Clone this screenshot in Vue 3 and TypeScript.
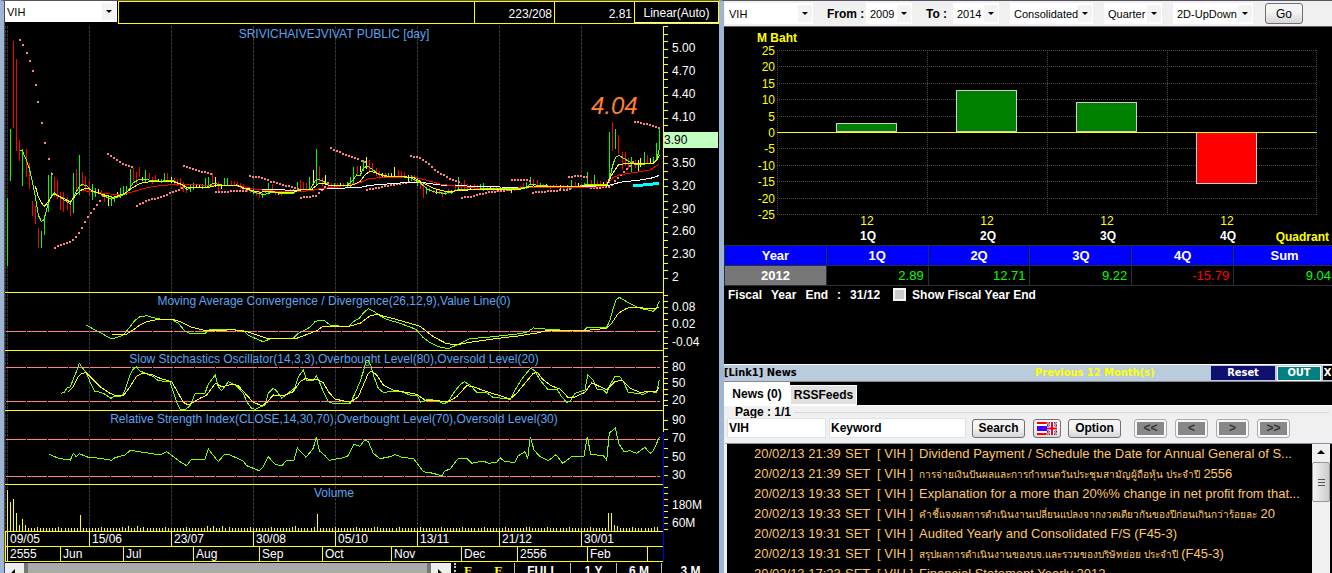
<script setup lang="ts">
type Pt = [number, number]

// Trace data is kept on a grid of three units per pixel.
const UNIT = 3
const LOWER = 855
const BAR_STEP = 9.11
const FIRST_BAR = 22

function parse(text: string, dy = 0): Pt[] {
  return text.trim().split(/\s+/).map((pair) => {
    const [x, y] = pair.split(',').map(Number)
    return [x / UNIT, (y + dy) / UNIT] as Pt
  })
}
function line(text: string, dy = 0): string {
  return parse(text, dy).map(([x, y]) => `${x.toFixed(1)},${y.toFixed(1)}`).join(' ')
}

const traces = [
  { color: '#ffffff', points: line('725,566 800,568 880,571 960,568 1000,565 1075,563 1110,556 1200,549 1270,548 1330,556 1400,558 1500,561 1620,562 1780,558 1820,558 1860,547 1920,540 1960,533 1978,526') },
  { color: '#ff0000', points: line('247,570 262,574 290,577 330,582 370,583 410,572 440,563 480,557 540,552 620,556 710,556 760,566 800,572 880,576 930,572 960,566 1000,562 1080,548 1110,535 1170,532 1240,531 1270,538 1320,552 1380,560 1450,566 1600,563 1760,562 1815,560 1840,532 1860,524 1900,518 1950,510 1978,492') },
  { color: '#80ff00', points: line('61,451 67,452 79,480 88,505 97,545 106,590 115,645 124,664 130,662 136,645 145,610 154,588 163,578 172,586 190,598 211,612 220,592 229,575 238,560 247,553 262,558 277,575 295,578 313,588 334,598 352,592 370,585 385,572 400,548 415,540 440,539 480,544 500,542 520,542 545,555 560,568 575,563 620,562 640,550 670,556 710,555 735,565 760,576 790,584 820,576 850,582 880,580 895,570 930,569 945,542 955,538 970,543 985,556 1040,556 1055,545 1070,525 1080,527 1090,505 1102,498 1120,510 1135,522 1150,528 1230,532 1262,550 1280,566 1300,575 1330,580 1355,578 1370,570 1440,567 1560,565 1583,560 1590,552 1620,557 1700,560 1740,558 1765,553 1800,555 1822,553 1830,530 1840,490 1848,470 1858,467 1875,477 1895,490 1910,494 1960,490 1970,480 1978,447') },
  { color: '#ffff00', points: line('106,558 115,590 124,608 133,619 145,605 154,590 163,582 190,595 211,606 230,582 247,568 262,565 277,572 310,584 340,592 375,580 400,562 420,550 450,545 520,545 545,553 560,562 620,563 650,556 710,556 740,568 780,577 800,574 850,578 880,577 900,570 935,568 955,552 975,551 990,557 1050,558 1080,545 1095,525 1110,513 1130,520 1160,528 1240,532 1270,550 1300,565 1340,575 1370,572 1440,568 1560,568 1600,558 1700,561 1780,556 1820,556 1835,525 1855,495 1870,492 1960,490 1972,480 1978,465') },
  { color: '#80ff00', points: line('259,120 280,132 300,142 320,154 335,162 350,157 365,152 375,145 390,125 405,106 420,95 440,92 460,98 480,102 515,103 535,115 555,138 570,145 615,145 630,133 650,133 700,134 730,137 745,150 765,160 790,170 810,162 880,160 895,145 930,127 945,110 960,105 975,108 990,120 1045,126 1060,110 1080,98 1090,84 1105,71 1120,78 1140,92 1160,103 1200,115 1240,130 1250,135 1270,158 1290,173 1315,185 1345,191 1375,178 1410,161 1480,155 1560,146 1580,142 1600,129 1620,130 1640,133 1680,135 1750,138 1760,128 1820,127 1830,105 1840,70 1848,45 1858,37 1880,50 1910,66 1930,72 1960,79 1970,68 1978,48', LOWER) },
  { color: '#ffff00', points: line('337,147 360,149 380,147 400,135 420,120 440,110 470,104 520,103 545,112 570,125 600,133 620,138 700,134 740,140 770,150 800,160 850,162 890,160 930,145 950,137 970,123 1050,123 1080,115 1110,93 1130,88 1170,98 1230,115 1260,124 1300,155 1340,176 1370,179 1410,172 1480,162 1560,152 1610,144 1640,137 1740,138 1820,130 1835,115 1855,85 1880,70 1900,66 1960,72 1978,67', LOWER) },
  { color: '#80ff00', points: line('184,325 193,322 202,307 211,306 220,282 229,260 238,235 247,248 259,263 270,290 283,318 295,320 310,325 333,340 345,333 360,335 370,328 380,300 390,270 400,252 409,245 420,258 440,266 460,275 475,287 510,290 520,320 530,352 540,372 555,374 570,362 585,327 615,325 625,297 646,270 655,305 665,317 685,290 700,297 712,305 730,325 740,350 755,370 765,373 795,360 805,325 820,310 830,318 845,340 860,328 885,308 895,275 910,256 920,285 940,285 949,273 958,290 970,320 985,350 1000,355 1050,357 1065,325 1080,290 1090,260 1098,228 1105,226 1112,240 1122,275 1135,310 1150,322 1200,318 1230,330 1252,332 1262,352 1285,342 1320,350 1330,357 1345,350 1360,325 1380,300 1393,290 1410,300 1430,322 1460,323 1480,338 1520,340 1530,345 1540,325 1560,290 1575,270 1592,250 1605,258 1620,285 1645,315 1670,312 1685,335 1700,352 1710,350 1725,325 1755,315 1763,270 1780,285 1790,312 1810,315 1820,325 1830,300 1845,274 1860,275 1870,290 1885,322 1910,325 1930,328 1945,320 1970,322 1978,285', LOWER) },
  { color: '#ffff00', points: line('204,320 220,305 235,275 245,265 259,263 275,280 300,305 330,325 350,333 372,330 390,305 410,273 430,264 460,270 480,280 515,290 535,325 550,352 565,360 580,352 600,340 620,330 646,295 665,305 700,297 715,302 735,325 760,352 785,362 800,353 820,330 850,332 880,320 900,290 915,281 955,285 970,293 985,320 1005,342 1050,352 1075,335 1090,300 1105,265 1115,258 1130,270 1150,300 1180,315 1250,328 1275,345 1320,348 1345,350 1370,335 1400,302 1420,305 1460,320 1500,332 1530,342 1550,325 1575,295 1600,265 1612,262 1630,285 1655,303 1680,312 1705,338 1720,338 1755,322 1775,293 1800,305 1820,314 1845,290 1865,285 1890,310 1920,322 1970,318 1978,305', LOWER) },
  { color: '#80ff00', points: line('148,508 175,520 211,525 220,505 229,515 238,506 265,517 300,520 335,526 345,518 375,510 391,496 430,502 480,510 500,500 520,515 540,530 560,542 575,522 615,522 625,492 655,530 672,509 690,510 730,528 740,542 778,557 790,545 805,515 825,538 845,543 860,525 882,525 892,489 918,517 940,490 949,455 958,497 975,512 988,526 1030,518 1045,512 1062,478 1080,484 1095,464 1105,470 1120,505 1140,521 1170,515 1185,509 1210,518 1240,520 1255,540 1270,560 1300,565 1325,573 1335,557 1350,553 1375,520 1400,520 1415,535 1450,528 1465,535 1490,532 1500,518 1515,530 1545,532 1555,512 1575,500 1583,520 1591,455 1602,495 1620,515 1645,527 1668,509 1688,535 1715,515 1752,513 1762,455 1772,508 1810,512 1820,525 1828,445 1846,428 1856,475 1872,500 1890,497 1910,505 1935,487 1950,505 1960,498 1970,475 1978,457', LOWER) },
]
const longAverage = line('1900,557 1930,555 1978,550')

const barText = `22,595,800,g 31,387,543,g 40,123,383,r 49,178,455,r 58,420,483,r 67,447,558,g 79,447,530,r 88,490,567,r
97,603,648,r 106,618,671,r 115,685,744,r 124,692,744,g 133,645,704,g 145,525,636,g 154,517,596,g 163,530,590,r
172,541,598,r 181,575,628,r 190,577,636,r 202,590,630,r 211,600,648,r 220,519,640,g 229,508,570,r 238,465,585,g
247,516,558,r 256,530,570,r 268,542,585,r 277,551,600,g 286,565,592,g 295,568,582,y 304,569,586,r 313,580,606,r
325,585,617,y 334,590,617,g 343,588,606,g 352,577,593,y 361,563,592,g 370,558,585,g 379,558,585,g 391,508,572,g
400,503,543,r 409,515,550,r 418,501,532,r 427,530,543,y 436,510,548,g 448,519,538,r 457,530,550,r 466,524,545,r
475,538,548,y 484,537,548,g 493,519,545,g 502,519,541,r 514,530,548,y 523,535,552,r 532,538,560,r 541,534,567,r
550,545,575,r 559,558,578,r 571,552,575,g 580,549,571,g 589,556,566,y 598,556,566,y 607,552,566,g 616,535,566,g
625,530,560,g 637,519,552,r 646,530,560,y 655,545,575,r 664,552,567,y 673,534,556,g 682,534,556,g 694,542,556,r
703,542,556,r 712,545,560,r 721,550,568,r 730,552,574,r 742,560,576,r 751,564,580,r 760,568,582,g 769,572,588,r
778,572,592,r 787,578,594,g 796,566,578,g 805,549,578,g 817,552,578,r 826,570,584,r 835,573,584,y 844,572,586,r
853,574,584,y 862,570,582,g 871,568,580,r 880,566,580,g 892,545,575,g 901,541,570,r 910,545,565,r 919,549,570,r
928,531,567,g 940,510,556,y 949,447,556,g 958,498,545,r 967,533,556,r 976,525,556,y 985,545,560,r 994,548,562,r
1003,550,562,g 1012,548,562,r 1021,550,560,y 1030,550,562,r 1042,546,562,g 1051,531,560,g 1060,501,552,g 1072,499,522,r
1081,497,515,y 1090,480,512,g 1099,470,505,y 1108,480,518,r 1117,489,515,r 1129,503,526,r 1138,512,535,r 1147,519,532,y
1156,520,534,r 1165,518,534,g 1174,520,532,y 1183,501,530,y 1195,510,530,r 1204,512,530,r 1213,515,532,r 1225,526,548,y
1234,526,544,g 1243,526,550,r 1252,533,556,g 1261,540,568,r 1270,552,594,r 1279,560,580,g 1288,565,578,r 1300,570,580,r
1309,568,582,y 1318,570,583,r 1327,575,590,r 1336,572,584,g 1345,568,582,r 1354,570,583,g 1366,552,572,r 1375,530,572,g
1384,549,567,r 1393,541,567,r 1402,552,567,r 1411,556,570,y 1423,552,567,r 1432,556,570,r 1441,552,567,g 1450,548,572,g
1462,560,572,r 1471,562,572,y 1480,560,572,r 1489,560,574,r 1501,562,572,y 1513,560,572,r 1525,562,574,g 1534,560,578,y
1543,562,574,r 1552,560,570,y 1561,558,570,r 1570,549,567,r 1579,545,565,g 1591,531,556,g 1600,537,556,r 1612,541,556,r
1621,550,562,g 1630,552,564,r 1639,552,564,y 1651,554,566,r 1660,554,564,g 1669,553,565,r 1681,555,566,y 1690,554,566,r
1702,555,567,g 1714,541,567,g 1726,545,560,r 1735,548,560,y 1744,552,562,r 1753,550,562,g 1762,516,560,g 1774,541,552,r
1783,526,552,g 1792,541,556,r 1801,544,556,r 1810,545,556,y 1819,543,560,r 1828,396,550,g 1837,367,455,r 1846,387,447,g
1855,405,462,r 1867,456,510,r 1876,456,497,r 1885,475,508,r 1894,471,516,g 1906,480,505,r 1915,480,512,y 1921,475,503,y
1933,456,490,g 1942,464,490,r 1951,475,492,y 1960,471,492,g 1969,430,480,g 1978,387,447,g`
const barColors: Record<string, string> = { g: '#00ff00', r: '#ff0000', y: '#ffff00' }
const priceBars = barText.split(/\s+/).map((item) => {
  const [x, top, bottom, kind] = item.split(',')
  return {
    x: Math.floor(Number(x) / UNIT),
    y: Math.round(Number(top) / UNIT),
    h: Math.round((Number(bottom) - Number(top)) / UNIT),
    color: barColors[kind],
  }
})

const sarRuns = [
  '162,743 180,735 200,728 219,720 228,710 237,697 246,680 255,662 267,646 276,631 285,620 294,608 303,596 312,583',
  '323,463 340,472 367,490 400,502', '408,617 433,604 487,589 542,566', '549,499 590,512 636,522',
  '646,577 700,574 742,572', '747,529 775,532 815,546 892,566', '900,593 945,588 965,570 984,547',
  '992,445 1045,468 1090,484', '1099,569 1150,560 1232,546', '1230,469 1255,472 1280,488 1300,508 1340,532 1378,548',
  '1383,593 1410,590 1460,578 1540,568', '1533,539 1590,542', '1598,578 1650,574 1710,568',
  '1704,530 1740,529 1762,533', '1770,565 1830,560 1850,535 1870,515 1895,490', '1902,365 1935,372 1978,386',
]
function sampleRun(text: string): Pt[] {
  const pts = parse(text)
  const out: Pt[] = []
  for (let x = pts[0][0]; x <= pts[pts.length - 1][0] + 1; x += BAR_STEP / UNIT) {
    let k = 1
    while (k < pts.length - 1 && pts[k][0] < x) k++
    const [x0, y0] = pts[k - 1]
    const [x1, y1] = pts[k]
    out.push([Math.floor(x), Math.round(y0 + ((x - x0) / (x1 - x0)) * (y1 - y0))])
  }
  return out
}
const sarDots: Pt[] = [
  ...parse('57,121 66,136 78,160 87,184 96,214 105,256 113,307 123,368 132,428 144,478 153,521')
    .map(([x, y]) => [Math.floor(x), Math.round(y)] as Pt),
  ...sarRuns.flatMap(sampleRun),
]

const volumeHeights: Record<number, number> = {
  0: 41, 1: 29, 2: 32, 3: 18, 4: 6, 5: 12, 6: 6, 24: 16, 40: 5, 43: 5, 66: 5, 68: 5, 71: 5, 95: 5, 102: 17,
  121: 4, 122: 4, 172: 4, 185: 4, 198: 18, 199: 18, 200: 6, 201: 5, 213: 4, 214: 4,
}
const volumeBars = Array.from({ length: 215 }, (_, i) => {
  const h = volumeHeights[i] ?? (i % 7 === 3 ? 4 : 3)
  return { x: Math.floor((FIRST_BAR + i * BAR_STEP) / UNIT), y: 531 - h, h }
})

const gridX = [7, 89, 171, 253, 335, 417, 499, 581]
const dates = ['09/05', '15/06', '23/07', '30/08', '05/10', '13/11', '21/12', '30/01']
const months = [
  { x: 7, label: '2555' }, { x: 60, label: 'Jun' }, { x: 123, label: 'Jul' }, { x: 193, label: 'Aug' },
  { x: 259, label: 'Sep' }, { x: 322, label: 'Oct' }, { x: 391, label: 'Nov' }, { x: 461, label: 'Dec' },
  { x: 517, label: '2556' }, { x: 587, label: 'Feb' }, { x: 647, label: '' },
]
const separators = [292, 350, 410, 484, 531, 546, 561]
const levels = [331, 367, 401, 439, 476]
const priceTicks = Array.from({ length: 34 }, (_, i) => Math.round(26 + i * 7.63)).filter((y) => y < 130 || y > 148)
const lowerTicks = [295, 301, 307, 313, 319, 325, 331, 337, 343, 348, 356, 361, 367, 372, 378, 383, 389, 394, 400, 405,
  420, 429, 439, 448, 457, 466, 475, 487, 493, 499, 505, 511, 517, 523, 529]
const axisLabels = [
  { y: 52, t: '5.00' }, { y: 75, t: '4.70' }, { y: 98, t: '4.40' }, { y: 121, t: '4.10' }, { y: 167, t: '3.50' },
  { y: 190, t: '3.20' }, { y: 213, t: '2.90' }, { y: 235, t: '2.60' }, { y: 258, t: '2.30' }, { y: 281, t: '2' },
  { y: 311, t: '0.08' }, { y: 328, t: '0.02' }, { y: 346, t: '-0.04' }, { y: 371, t: '80' }, { y: 387, t: '50' },
  { y: 404, t: '20' }, { y: 424, t: '90' }, { y: 442, t: '70' }, { y: 461, t: '50' }, { y: 479, t: '30' },
  { y: 509, t: '180M' }, { y: 527, t: '60M' },
]
const titles = [
  { y: 38, t: 'SRIVICHAIVEJVIVAT PUBLIC [day]' },
  { y: 305, t: 'Moving Average Convergence / Divergence(26,12,9),Value Line(0)' },
  { y: 363, t: 'Slow Stochastics Oscillator(14,3,3),Overbought Level(80),Oversold Level(20)' },
  { y: 423, t: 'Relative Strength Index(CLOSE,14,30,70),Overbought Level(70),Oversold Level(30)' },
  { y: 497, t: 'Volume' },
]
const ranges = ['FULL', '1 Y', '6 M', '3 M']

const profitTicks = [25, 20, 15, 10, 5, 0, -5, -10, -15, -20, -25].map((v, i) => ({ v, y: Math.round(50 + i * 16.4) }))
const profitBars = [
  { q: '1Q', x: 836, y: 123, h: 8, color: '#008000' },
  { q: '2Q', x: 956, y: 90, h: 41, color: '#008000' },
  { q: '3Q', x: 1076, y: 102, h: 29, color: '#008000' },
  { q: '4Q', x: 1196, y: 132, h: 51, color: '#ff0000' },
]
const values = ['2.89', '12.71', '9.22', '-15.79', '9.04']

const news = [
  { time: '20/02/13 21:39', title: 'Dividend Payment / Schedule the Date for Annual General of S...' },
  { time: '20/02/13 21:39', thai: 'การจ่ายเงินปันผลและการกำหนดวันประชุมสามัญผู้ถือหุ้น ประจำปี', title: ' 2556' },
  { time: '20/02/13 19:33', title: 'Explanation for a more than 20%% change in net profit from that...' },
  { time: '20/02/13 19:33', thai: 'คำชี้แจงผลการดำเนินงานเปลี่ยนแปลงจากงวดเดียวกันของปีก่อนเกินกว่าร้อยละ', title: ' 20' },
  { time: '20/02/13 19:31', title: 'Audited Yearly and Consolidated F/S (F45-3)' },
  { time: '20/02/13 19:31', thai: 'สรุปผลการดำเนินงานของบจ.และรวมของบริษัทย่อย ประจำปี', title: ' (F45-3)' },
  { time: '20/02/13 17:23', title: 'Financial Statement Yearly 2012' },
]
</script>

<template>
  <main class="desk">
    <section class="chart-panel">
      <header class="chart-head">
        <label class="combo symbol">
          <select aria-label="Symbol"><option>VIH</option></select>
        </label>
        <div class="readout">
          <span class="cell grow"></span>
          <span class="cell">223/208</span>
          <span class="cell">2.81</span>
          <button class="scale" type="button">Linear(Auto)</button>
        </div>
      </header>

      <svg class="plot" viewBox="5 23 714 540" role="img" aria-label="Price chart">
        <line x1="5.5" x2="5.5" y1="26" y2="531" class="grid" />
        <line v-for="x in gridX" :key="x" :x1="x + 0.5" :x2="x + 0.5" y1="26" y2="531" class="grid" />
        <text v-for="t in titles" :key="t.y" x="334" :y="t.y" class="title">{{ t.t }}</text>

        <rect v-for="(b, i) in priceBars" :key="'b' + i" :x="b.x" :y="b.y" width="1" :height="b.h" :fill="b.color" />
        <rect v-for="(d, i) in sarDots" :key="'d' + i" :x="d[0]" :y="d[1] - 1" width="2" height="2" fill="#ff8080" />
        <line v-for="y in levels" :key="'l' + y" x1="6" x2="660" :y1="y + 0.5" :y2="y + 0.5" class="level" />
        <polyline v-for="(t, i) in traces" :key="'t' + i" :points="t.points" :stroke="t.color" class="trace" />
        <polyline :points="longAverage" class="long" />
        <text x="591" y="114" class="peak">4.04</text>
        <rect v-for="(v, i) in volumeBars" :key="'v' + i" :x="v.x" :y="v.y" width="1" :height="v.h" fill="#ffff00" />

        <line v-for="y in separators" :key="'s' + y" x1="5" x2="664" :y1="y + 0.5" :y2="y + 0.5" class="rule" />
        <line x1="5.5" x2="5.5" y1="531" y2="562" class="rule" />
        <line x1="663.5" x2="663.5" y1="26" y2="432" class="rule" />
        <line x1="663.5" x2="663.5" y1="432" y2="562" class="rule blue" />
        <line v-for="y in priceTicks" :key="'p' + y" x1="664" x2="668" :y1="y + 0.5" :y2="y + 0.5" class="rule" />
        <line v-for="y in lowerTicks" :key="'q' + y" x1="664" x2="668" :y1="y + 0.5" :y2="y + 0.5" class="rule" />
        <text v-for="a in axisLabels" :key="'a' + a.y" x="672" :y="a.y" class="axis">{{ a.t }}</text>
        <rect x="664" y="132" width="54" height="16" fill="#c0ffc0" />
        <text x="664" y="144" class="axis dark">3.90</text>

        <g v-for="(x, i) in gridX" :key="'g' + x">
          <line :x1="x + 0.5" :x2="x + 0.5" y1="531" y2="547" class="rule" />
          <text :x="x + 3" y="543" class="axis">{{ dates[i] }}</text>
        </g>
        <g v-for="m in months" :key="'m' + m.x">
          <line :x1="m.x + 0.5" :x2="m.x + 0.5" y1="547" y2="562" class="rule" />
          <text :x="m.x + 3" y="558" class="axis">{{ m.label }}</text>
        </g>
      </svg>

      <footer class="chart-foot">
        <button class="step" type="button" aria-label="Scroll left"><svg viewBox="0 0 16 16"><path d="M10 2v12L4 8z" /></svg></button>
        <div class="track"></div>
        <button class="step" type="button" aria-label="Scroll right"><svg viewBox="0 0 16 16"><path d="M7 2v12l6-6z" /></svg></button>
        <span class="grip"></span>
        <button class="tool gold" type="button">E.</button>
        <button class="tool gold" type="button">E</button>
        <button v-for="r in ranges" :key="r" class="tool range" type="button">{{ r }}</button>
      </footer>
    </section>

    <section class="side">
      <header class="filters">
        <label class="combo company"><select aria-label="Company"><option>VIH</option></select></label>
        <b class="from">From :</b>
        <label class="combo year"><select aria-label="From year"><option>2009</option></select></label>
        <b class="to">To :</b>
        <label class="combo year"><select aria-label="To year"><option>2014</option></select></label>
        <label class="combo basis"><select aria-label="Basis"><option>Consolidated</option></select></label>
        <label class="combo period"><select aria-label="Period"><option>Quarter</option></select></label>
        <label class="combo style"><select aria-label="Chart style"><option>2D-UpDown</option></select></label>
        <button class="btn go" type="button">Go</button>
      </header>

      <svg class="plot" viewBox="724 27 608 218" role="img" aria-label="Quarterly profit">
        <line v-for="t in profitTicks" :key="t.v" x1="777" x2="1317" :y1="t.y + 0.5" :y2="t.y + 0.5" class="dots" />
        <line v-for="x in [777, 927, 1047, 1167, 1316]" :key="x" :x1="x + 0.5" :x2="x + 0.5" y1="50" y2="215" class="dots" />
        <text x="757" y="42" class="strong gold-text">M Baht</text>
        <text v-for="t in profitTicks" :key="'n' + t.v" x="775" :y="t.y + 5" class="scale-text">{{ t.v }}</text>
        <g v-for="b in profitBars" :key="b.q">
          <rect :x="b.x + 0.5" :y="b.y + 0.5" width="60" :height="b.h" :fill="b.color" stroke="#d0d0d0" />
          <text :x="b.x + 31" y="225" class="twelve">12</text>
          <text :x="b.x + 32" y="240" class="strong quarter">{{ b.q }}</text>
        </g>
        <line x1="777" x2="1317" y1="132.5" y2="132.5" class="rule" />
        <text x="1329" y="241" class="strong gold-text end">Quadrant</text>
      </svg>

      <div class="table-box">
        <table>
          <thead>
            <tr><th>Year</th><th>1Q</th><th>2Q</th><th>3Q</th><th>4Q</th><th>Sum</th></tr>
          </thead>
          <tbody>
            <tr>
              <th>2012</th>
              <td v-for="v in values" :key="v" :class="{ loss: v.startsWith('-') }">{{ v }}</td>
            </tr>
          </tbody>
        </table>
      </div>

      <div class="fiscal">
        <span>Fiscal</span><span>Year</span><span>End</span><span>:</span><span>31/12</span>
        <label><input type="checkbox" />Show Fiscal Year End</label>
      </div>

      <div class="news-bar">
        <h2>[Link1] News</h2>
        <span class="notice">Previous 12 Month(s)</span>
        <button class="reset" type="button">Reset</button>
        <button class="out" type="button">OUT</button>
        <button class="close" type="button">X</button>
      </div>
      <nav class="tabs">
        <button class="tab active" type="button">News (0)</button>
        <button class="tab" type="button">RSSFeeds</button>
      </nav>
      <div class="search">
        <div class="page-line"><span>Page : 1/1</span></div>
        <div class="search-row">
          <input class="sym" aria-label="News symbol" value="VIH" />
          <input class="key" aria-label="Keyword" value="Keyword" />
          <button class="btn find" type="button">Search</button>
          <button class="btn flag" type="button" aria-label="Language">
            <svg viewBox="0 0 20 13">
              <rect width="20" height="13" fill="#fff" />
              <rect width="10" height="2" fill="#f00" /><rect y="11" width="10" height="2" fill="#f00" />
              <rect y="4" width="10" height="5" fill="#4000ff" />
              <rect x="10" width="10" height="13" fill="#203070" />
              <path d="M10 0l10 13M20 0L10 13" stroke="#fff" stroke-width="2" />
              <path d="M10 0l10 13M20 0L10 13" stroke="#e02040" stroke-width="1" />
              <path d="M15 0v13M10 6.500h10" stroke="#fff" stroke-width="4" />
              <path d="M15 0v13M10 6.500h10" stroke="#f00020" stroke-width="2" />
            </svg>
          </button>
          <button class="btn option" type="button">Option</button>
          <button v-for="n in ['<<', '<', '>', '>>']" :key="n" class="btn pager" type="button"><span>{{ n }}</span></button>
        </div>
      </div>

      <div class="list">
        <ul>
          <li v-for="(n, i) in news" :key="i">
            <span>{{ n.time }}</span><span>SET</span><span>[ VIH ]</span>
            <a href="#"><span v-if="n.thai" class="thai">{{ n.thai }}</span>{{ n.title }}</a>
          </li>
        </ul>
        <div class="scroll">
          <svg viewBox="0 0 17 16"><path d="M9 6l4 4H5z" /></svg>
          <div class="thumb"><i></i><i></i><i></i></div>
          <svg class="down" viewBox="0 0 17 16"><path d="M5 7h8l-4 4z" /></svg>
        </div>
      </div>
    </section>
  </main>
</template>

<style>
body { margin: 0; background: #000; overflow: hidden; }
</style>

<style scoped>
* { box-sizing: border-box; }
.desk {
  display: grid;
  grid-template-columns: 719fr 613fr;
  height: 100vh;
  overflow: hidden;
  background: #000;
  color: #fff;
  font: 12px/16px "Liberation Sans", "Noto Sans", sans-serif;
}
button, input, select { font: inherit; margin: 0; padding: 0; border: 0; border-radius: 0; }
.chart-panel { display: flex; flex-direction: column; min-width: 0; padding-left: 1px; border-left: 4px solid #9fb6d2; border-top: 1px solid #5c5064; box-shadow: inset 1px 0 #504860; }
.chart-head { display: flex; gap: 1px; height: 22px; }
.combo { position: relative; display: block; height: 21px; background: #fff; color: #000; font: 11px/20px "Liberation Sans", sans-serif; }
.combo select { appearance: none; width: 100%; height: 100%; padding: 0 0 0 4px; background: transparent; color: #000; }
.combo::after { content: ""; position: absolute; top: 9px; right: 5px; border: 3px solid transparent; border-top-color: #000; border-bottom: 0; pointer-events: none; }
.combo::before { content: ""; position: absolute; top: 2px; right: 1px; bottom: 2px; width: 14px; background: #f3f3f3; pointer-events: none; }
.symbol { width: 112px; }
.symbol select { padding-left: 2px; }
.readout { display: flex; flex: 1; height: 23px; border: 1px solid #ff0; }
.cell { width: 80px; padding: 4px 2px 0 0; border-right: 1px solid #ff0; text-align: right; }
.cell.grow { flex: 1; }
.scale { width: 83px; height: 21px; padding-top: 2px; border-bottom: 1px solid #fff; background: #000; color: #fff; }
.plot { display: block; width: 100%; height: auto; flex: none; shape-rendering: crispEdges; }
.grid { stroke: #383838; stroke-dasharray: 3 1; }
.rule { stroke: #ff0; }
.rule.blue { stroke: #00f; }
.level { stroke: #ff8080; stroke-dasharray: 20 1; }
.trace { fill: none; stroke-width: 1; }
.long { fill: none; stroke: #0ff; stroke-width: 3; }
.title { fill: #5aa5f0; text-anchor: middle; }
.axis { fill: #fff; }
.axis.dark { fill: #000; }
.peak { fill: #ff8030; font-size: 24px; font-style: italic; }
.chart-foot {
  display: grid;
  grid-template-columns: 19fr 407fr 20fr 6fr 26fr 31fr 56fr 46fr 45fr 58fr;
  align-items: start;
  height: 24px;
  flex: none;
}
.step { height: 24px; background: #eee; }
.step svg { display: block; width: 16px; height: 18px; }
.track { height: 24px; background: #aaa; border-left: 4px solid #777; border-right: 4px solid #777; }
.grip { height: 16px; width: 2px; margin-left: 3px; border-left: 2px dotted #ccc; }
.tool { min-width: 0; background: none; color: #fff; font-weight: 700; line-height: 16px; }
.tool.gold { color: #ff0; font-family: "Liberation Serif", serif; font-size: 13px; }
.tool.range { border-left: 1px solid #bbb; }

.side { display: flex; flex-direction: column; min-width: 0; border-left: 5px solid #9fb6d2; border-top: 1px solid #5c5064; }
.filters { display: flex; align-items: center; height: 26px; flex: none; padding-left: 1px; background: #f0f0f0; color: #000; border-bottom: 1px solid #705870; }
.company { width: 88px; }
.year { width: 46px; }
.basis { width: 83px; margin-left: 11px; }
.period { width: 58px; margin-left: 11px; }
.style { width: 80px; margin-left: 11px; }
.from { width: 53px; padding-left: 14px; white-space: nowrap; }
.to { width: 41px; padding-left: 14px; white-space: nowrap; }
.btn { border: 1px solid #707070; border-radius: 3px; background: linear-gradient(#f4f4f4 45%, #d6d6d6); color: #000; font-weight: 700; }
.go { width: 38px; height: 21px; margin-left: 12px; font-weight: 400; }
.dots { stroke: #484848; stroke-dasharray: 1 1; }
.strong { font-weight: 700; fill: #fff; }
.strong.gold-text { fill: #ff0; }
.end { text-anchor: end; }
.quarter, .twelve { text-anchor: middle; }
.scale-text { fill: #ff0; text-anchor: end; }
.twelve { fill: #ff0; }
.table-box { flex: none; overflow: hidden; }
table { width: calc(100% + 4px); table-layout: fixed; border-collapse: collapse; font-size: 13px; line-height: 18px; }
th, td { height: 20px; padding: 0 4px; border: 1px solid #26303a; }
thead th { background: #00f; }
tbody th { background: #777; }
td { color: #0f0; text-align: right; }
td.loss { color: #f00; }
.fiscal { display: flex; gap: 9px; flex: none; height: 78px; padding: 1px 0 0 4px; font-weight: 700; }
.fiscal label { display: flex; align-items: flex-start; gap: 6px; padding-left: 4px; }
.fiscal input { appearance: none; width: 13px; height: 13px; margin-top: 1px; background: #ccc; border: 2px solid #f4f4f4; }
.news-bar { display: flex; align-items: center; height: 18px; flex: none; gap: 2px; background: #b9cbdc; border-top: 1px solid #fff; border-bottom: 1px solid #888; color: #000; font: 700 11px/14px "DejaVu Sans Condensed", "Noto Sans", sans-serif; }
.news-bar h2 { margin: 0; font: inherit; flex: 1; }
.notice { width: 174px; color: #ff0; }
.reset { width: 64px; height: 14px; background: #101070; color: #fff; }
.out { width: 44px; height: 15px; background: #008080; color: #fff; border: 1px solid #fff; line-height: 12px; }
.close { width: 9px; height: 14px; overflow: hidden; background: #000; color: #fff; }
.tabs { display: flex; height: 23px; flex: none; font-weight: 700; }
.tab { width: 67px; height: 20px; margin-top: 3px; background: #e0e0e0; color: #000; font-weight: 700; border: 1px solid #fff; }
.tab.active { width: 66px; height: 23px; margin-top: 0; background: #fff; }
.search { flex: none; background: #f0f0f0; color: #000; height: 38px; padding-left: 3px; border-top: 1px solid #fff; font-weight: 700; }
.page-line { display: flex; align-items: center; gap: 3px; height: 12px; overflow: hidden; padding-left: 8px; }
.page-line::after { content: ""; flex: 1; height: 1px; margin-right: 3px; background: #ccdbe4; }
.search-row { display: flex; align-items: center; }
.search-row input { height: 20px; padding-left: 1px; background: #fff; color: #000; border: 1px solid #dce4ea; font-weight: 700; }
.sym { width: 99px; }
.search-row .key { width: 137px; margin-left: 3px; }
.find { width: 53px; height: 19px; margin-left: 6px; }
.flag { display: flex; align-items: center; justify-content: center; width: 28px; height: 19px; margin-left: 8px; }
.flag svg { width: 20px; height: 13px; }
.option { width: 53px; height: 19px; margin: 0 5px 0 7px; }
.pager { width: 33px; height: 19px; margin-left: 8px; padding: 2px; border-color: #aaa; background: #f8f8f8; }
.pager span { display: block; background: #888; color: #333; line-height: 13px; }
.list { display: flex; flex: 1; min-height: 0; border-left: 3px solid #f0f0f0; border-top: 1px solid #8090a0; }
.list ul { flex: 1; min-width: 0; margin: 0; padding: 0 0 0 27px; list-style: none; overflow: hidden; font-size: 13px; line-height: 20px; color: #ffc864; }
.list li { display: grid; grid-template-columns: 91px 32px 42px 1fr; height: 20px; white-space: nowrap; }
.list a { color: inherit; text-decoration: none; white-space: pre; }
.thai { font-size: 10px; }
.scroll { display: flex; flex-direction: column; width: 18px; margin-right: 2px; background: #f0f0f0; }
.scroll svg { width: 17px; height: 16px; }
.thumb { display: flex; flex-direction: column; align-items: center; justify-content: center; gap: 2px; height: 40px; margin-top: 2px; border: 1px solid #999; border-radius: 2px; background: linear-gradient(90deg, #f4f4f4, #ccc); }
.thumb i { width: 7px; height: 1px; background: #555; }
.down { margin-top: auto; }
</style>
